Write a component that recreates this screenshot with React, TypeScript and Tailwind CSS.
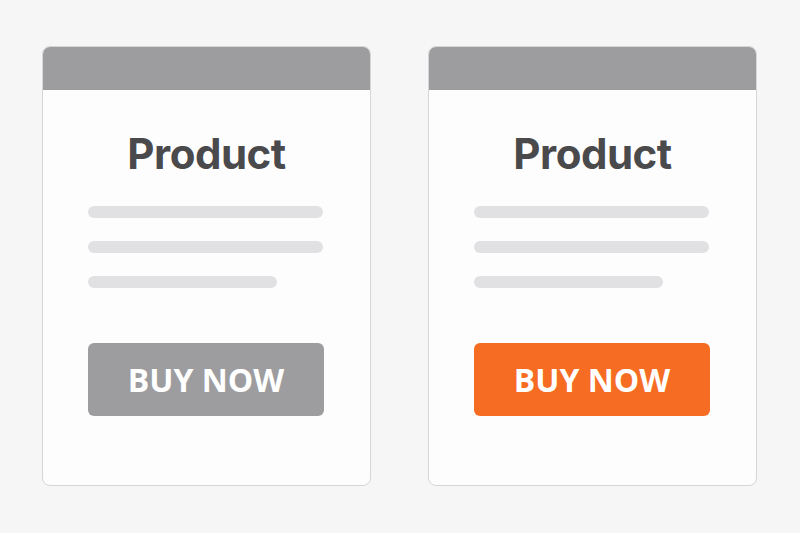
const lines = ['w-[235px]', 'w-[235px]', 'w-[189px]']

function ProductCard({ accent }: { accent: boolean }) {
  return (
    <div className="w-[329px] h-[440px] rounded-lg border border-[#d6d6d8] bg-[#fdfdfd] overflow-hidden flex flex-col">
      <div className="h-[43px] bg-[#9d9da0]" />
      <div className="px-[45px] flex flex-col">
        <h2 className="mt-[40px] text-center text-[42px] leading-[48px] font-bold text-[#4a4a4d] font-['Inter',sans-serif] tracking-[-0.5px]">
          Product
        </h2>
        <div className="mt-[28px] flex flex-col gap-[23px]">
          {lines.map((w, i) => (
            <div key={i} className={`${w} h-[12px] rounded-full bg-[#e1e1e3]`} />
          ))}
        </div>
        <button
          className={`mt-[55px] w-[236px] h-[73px] rounded-md text-white text-[32px] font-bold font-['Open_Sans',sans-serif] ${
            accent ? 'bg-[#f76c23]' : 'bg-[#9d9da0]'
          }`}
        >
          BUY NOW
        </button>
      </div>
    </div>
  )
}

export default function App() {
  return (
    <div className="w-[800px] h-[533px] bg-[#f6f6f6] flex gap-[57px] pl-[42px] pt-[46px]">
      <ProductCard accent={false} />
      <ProductCard accent />
    </div>
  )
}
